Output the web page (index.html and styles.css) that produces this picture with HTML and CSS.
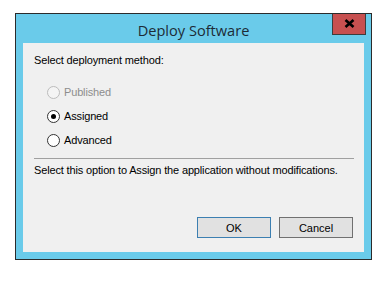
FILE: index.html
```html
<!DOCTYPE html>
<html lang="en">
<head>
    <meta charset="UTF-8">
    <title>Deploy Software</title>
    <link rel="stylesheet" href="styles.css">
</head>
<body>
    <div class="window">
        <div class="title-bar">
            <span></span>
            <div class="title">Deploy Software</div>
            <button class="close-btn" aria-label="Close">
                <svg width="11" height="9" viewBox="0 0 11 9">
                    <path d="M1.5 1 L9.5 8 M9.5 1 L1.5 8" stroke="#000" stroke-width="2.6" stroke-linecap="butt"/>
                </svg>
            </button>
        </div>

        <div class="client">
            <div class="prompt">Select deployment method:</div>

            <div class="radio-list">
                <label class="radio disabled">
                    <span class="radio-dot"></span>
                    <span>Published</span>
                </label>
                <label class="radio checked">
                    <span class="radio-dot"></span>
                    <span>Assigned</span>
                </label>
                <label class="radio">
                    <span class="radio-dot"></span>
                    <span>Advanced</span>
                </label>
            </div>

            <div class="separator"></div>

            <div class="description">Select this option to Assign the application without modifications.</div>

            <div class="buttons">
                <button class="btn btn-default">OK</button>
                <button class="btn">Cancel</button>
            </div>
        </div>
    </div>
</body>
</html>
```

FILE: styles.css
```css
* {
    margin: 0;
    padding: 0;
    box-sizing: border-box;
}

body {
    background-color: #ffffff;
    margin: 13px 0 0 15px;
    font-family: 'Liberation Sans', Arial, sans-serif;
    font-size: 11px;
    letter-spacing: -0.15px;
    color: #000000;
}

.window {
    width: 357px;
    border: 1px solid #2b2b2b;
    background-color: #6acbea;
    padding: 0 6px 7px 7px;
}

.title-bar {
    height: 29px;
    display: grid;
    grid-template-columns: 1fr auto 1fr;
    align-items: start;
    margin: 0 -6px 0 -7px;
}

.title {
    font-family: 'Open Sans', 'Noto Sans', sans-serif;
    font-size: 14.6px;
    letter-spacing: 0;
    color: #1d2b36;
    line-height: 20px;
    padding-top: 6px;
    white-space: nowrap;
}

.close-btn {
    justify-self: end;
    margin-right: 5px;
    width: 34px;
    height: 21px;
    background-color: #c75050;
    border: 1px solid #3d3d3d;
    border-top: none;
    display: flex;
    align-items: center;
    justify-content: center;
    padding-bottom: 2px;
}

.close-btn svg {
    display: block;
}

.client {
    width: 341px;
    height: 209px;
    background-color: #f0f0f0;
    padding: 11px 11px 14px 11px;
    display: flex;
    flex-direction: column;
}

.prompt {
    line-height: 13px;
}

.radio-list {
    margin-top: 13px;
    padding-left: 13px;
    display: flex;
    flex-direction: column;
}

.radio {
    height: 24px;
    display: flex;
    align-items: center;
    gap: 4px;
}

.radio-dot {
    width: 13px;
    height: 13px;
    border: 1px solid #333333;
    border-radius: 50%;
    background-color: #ffffff;
    display: flex;
    align-items: center;
    justify-content: center;
}

.radio.checked .radio-dot::after {
    content: '';
    width: 5px;
    height: 5px;
    border-radius: 50%;
    background-color: #000000;
}

.radio.disabled {
    color: #8d8d8d;
}

.radio.disabled .radio-dot {
    border-color: #bcbcbc;
    background-color: #f4f4f4;
}

.separator {
    margin-top: 6px;
    height: 1px;
    width: 320px;
    background-color: #a0a0a0;
}

.description {
    margin-top: 5px;
    line-height: 13px;
}

.buttons {
    margin-top: auto;
    display: flex;
    justify-content: flex-end;
    gap: 8px;
}

.btn {
    width: 74px;
    height: 21px;
    background-color: #e1e1e1;
    border: 1px solid #707070;
    font-family: 'Liberation Sans', Arial, sans-serif;
    font-size: 11px;
    letter-spacing: 0;
    color: #000000;
}

.btn-default {
    border-color: #3c7fb1;
}
```
